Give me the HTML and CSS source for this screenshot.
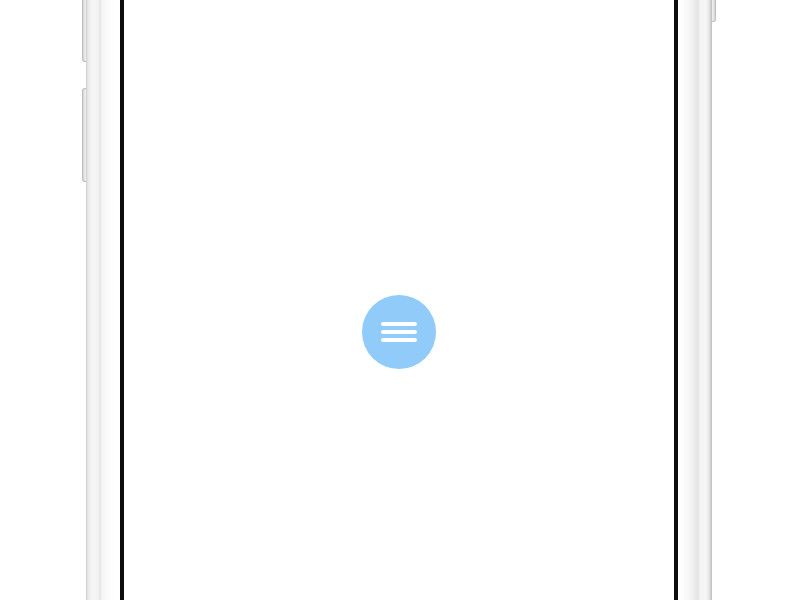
FILE: index.html
```html
<!DOCTYPE html>
<html>
<head>
<meta charset="utf-8">
<link rel="stylesheet" href="styles.css">
</head>
<body>
<div class="stage">
  <div class="phone">
    <span class="btn btn-left btn-a"></span>
    <span class="btn btn-left btn-b"></span>
    <span class="btn btn-right btn-c"></span>
    <div class="screen">
      <button class="menu" aria-label="Menu">
        <span class="bar"></span>
        <span class="bar"></span>
        <span class="bar"></span>
      </button>
    </div>
  </div>
</div>
</body>
</html>
```
FILE: styles.css
```css
html, body {
  margin: 0;
  padding: 0;
  background: #fff;
  font-family: "Liberation Sans", Arial, sans-serif;
}
.stage {
  width: 800px;
  height: 600px;
  display: flex;
  justify-content: center;
  overflow: hidden;
}
.phone {
  position: relative;
  width: 626px;
  height: 600px;
  margin-left: -2px;
  box-sizing: border-box;
  padding: 0 34px;
  display: flex;
  background: linear-gradient(to right,
    #c8c8c8 0px, #dedede 1px, #ededed 3px, #f6f6f6 6px, #f3f3f3 12px,
    #e4e4e4 14px, #f5f5f5 16px, #fbfbfb 22px, #ffffff 28px, #ffffff 34px,
    #ffffff 592px, #fbfbfb 598px, #f5f5f5 604px, #e4e4e4 612px, #f3f3f3 614px,
    #f6f6f6 620px, #e6e6e6 623px, #bdbdbd 626px);
}
.btn {
  position: absolute;
  width: 4px;
  background: linear-gradient(to right, #d6d6d6, #f2f2f2);
  border: 1px solid #bdbdbd;
  box-sizing: border-box;
}
.btn-left {
  left: -4px;
  border-right: none;
  border-radius: 3px 0 0 3px;
}
.btn-a { top: -6px; height: 68px; }
.btn-b { top: 88px; height: 94px; }
.btn-right {
  right: -4px;
  border-left: none;
  border-radius: 0 3px 3px 0;
  background: linear-gradient(to left, #d6d6d6, #f2f2f2);
}
.btn-c { top: -6px; height: 28px; }
.screen {
  flex: 1;
  background: #fff;
  border-left: 4px solid #0d0d0d;
  border-right: 4px solid #0d0d0d;
  display: flex;
  align-items: center;
  justify-content: center;
  padding-top: 64px;
}
.menu {
  width: 74px;
  height: 74px;
  border-radius: 50%;
  border: none;
  padding: 0;
  background: #90cbf9;
  display: flex;
  flex-direction: column;
  align-items: center;
  justify-content: center;
  gap: 4px;
  cursor: pointer;
}
.bar {
  display: block;
  width: 36px;
  height: 4px;
  border-radius: 2px;
  background: #fff;
}
```
